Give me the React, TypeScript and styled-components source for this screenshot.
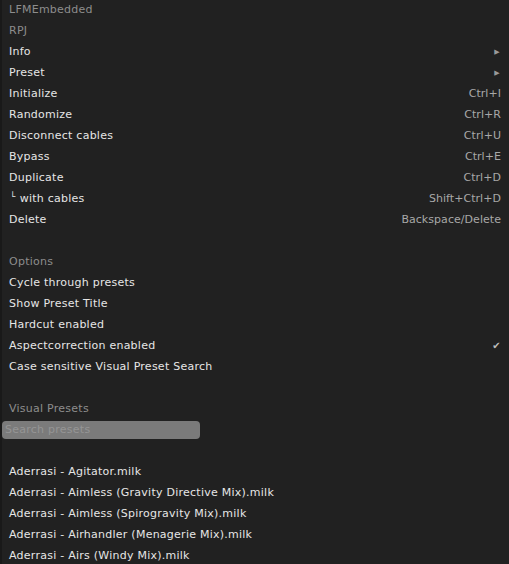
import React from "react";
import styled, { createGlobalStyle } from "styled-components";

const Global = createGlobalStyle`
  html, body { margin: 0; padding: 0; background: #1c1c1c; }
  body { font-family: "DejaVu Sans", sans-serif; }
`;

const Page = styled.div`
  display: flex;
  width: 509px;
  height: 564px;
  overflow: hidden;
  background: #1c1c1c;
`;

const Edge = styled.div`
  width: 2px;
  flex: none;
  background: #191919;
`;

const Menu = styled.div`
  flex: 1;
  background: #212121;
  display: flex;
  flex-direction: column;
  margin-top: -1px;
`;

const Row = styled.div<{ $kind?: "header" | "item" }>`
  height: 21px;
  flex: none;
  display: flex;
  align-items: center;
  justify-content: space-between;
  padding: 0 8px 0 7px;
  font-size: 11px;
  letter-spacing: 0.25px;
  color: ${(p) => (p.$kind === "header" ? "#8d8d8d" : "#e6e6e6")};
  white-space: nowrap;
`;

const Right = styled.span`
  color: #a8a8a8;
  letter-spacing: 0.05px;
`;

const Arrow = styled.span`
  color: #9a9a9a;
  font-size: 7px;
  margin-right: 1px;
`;

const Check = styled.span`
  color: #bdbdbd;
  font-size: 10px;
`;

const Corner = styled.span`
  font-size: 9px;
  margin-left: 1px;
  margin-right: 4px;
  position: relative;
  top: -2px;
`;

const SearchRow = styled.div`
  height: 21px;
  flex: none;
  display: flex;
  align-items: center;
`;

const Search = styled.input`
  width: 198px;
  height: 18px;
  box-sizing: border-box;
  border: none;
  border-radius: 4px;
  background: #7b7b7b;
  padding: 0 3px;
  font-family: "DejaVu Sans", sans-serif;
  font-size: 11px;
  letter-spacing: 0.25px;
  color: #e6e6e6;
  outline: none;
  &::placeholder { color: #959595; }
`;

type Item = { label: React.ReactNode; right?: React.ReactNode; kind?: "header" | "item" | "blank" };

const top: Item[] = [
  { label: "LFMEmbedded", kind: "header" },
  { label: "RPJ", kind: "header" },
  { label: "Info", right: <Arrow>▶</Arrow> },
  { label: "Preset", right: <Arrow>▶</Arrow> },
  { label: "Initialize", right: <Right>Ctrl+I</Right> },
  { label: "Randomize", right: <Right>Ctrl+R</Right> },
  { label: "Disconnect cables", right: <Right>Ctrl+U</Right> },
  { label: "Bypass", right: <Right>Ctrl+E</Right> },
  { label: "Duplicate", right: <Right>Ctrl+D</Right> },
  { label: <span><Corner>└</Corner>with cables</span>, right: <Right>Shift+Ctrl+D</Right> },
  { label: "Delete", right: <Right>Backspace/Delete</Right> },
  { label: "", kind: "blank" },
  { label: "Options", kind: "header" },
  { label: "Cycle through presets" },
  { label: "Show Preset Title" },
  { label: "Hardcut enabled" },
  { label: "Aspectcorrection enabled", right: <Check>✔</Check> },
  { label: "Case sensitive Visual Preset Search" },
  { label: "", kind: "blank" },
  { label: "Visual Presets", kind: "header" },
];

const presets = [
  "Aderrasi - Agitator.milk",
  "Aderrasi - Aimless (Gravity Directive Mix).milk",
  "Aderrasi - Aimless (Spirogravity Mix).milk",
  "Aderrasi - Airhandler (Menagerie Mix).milk",
  "Aderrasi - Airs (Windy Mix).milk",
];

export default function App() {
  return (
    <Page>
      <Global />
      <Edge />
      <Menu>
        {top.map((it, i) => (
          <Row key={i} $kind={it.kind === "header" ? "header" : "item"}>
            <span>{it.label}</span>
            {it.right}
          </Row>
        ))}
        <SearchRow>
          <Search placeholder="Search presets" />
        </SearchRow>
        <Row />
        {presets.map((p) => (
          <Row key={p}>
            <span>{p}</span>
          </Row>
        ))}
      </Menu>
    </Page>
  );
}
